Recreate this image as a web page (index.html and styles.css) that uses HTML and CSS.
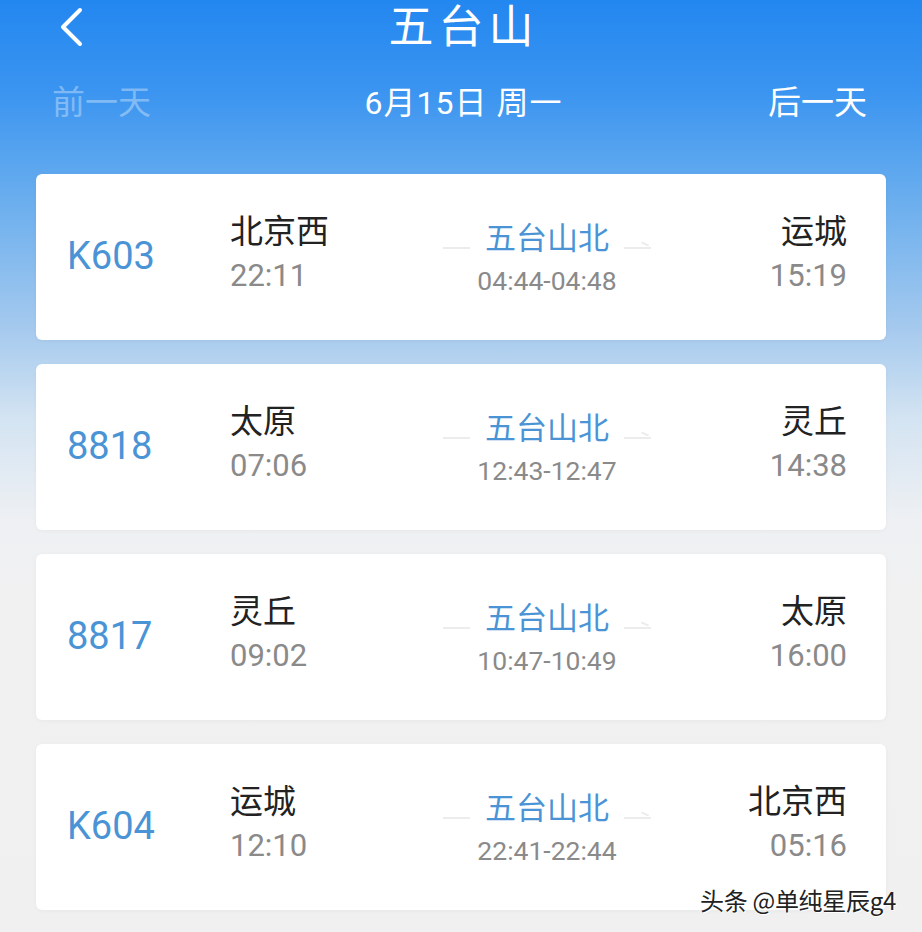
FILE: index.html
```html
<!DOCTYPE html>
<html lang="zh">
<head>
<meta charset="utf-8">
<link rel="stylesheet" href="styles.css">
</head>
<body>
<div class="page">
  <header class="topbar">
    <svg class="back" width="30" height="40" viewBox="0 0 30 40"><path d="M24 3 L7 20 L24 37" fill="none" stroke="#fff" stroke-width="4" stroke-linecap="round" stroke-linejoin="round"/></svg>
    <h1 class="title">五台山</h1>
  </header>
  <nav class="daterow">
    <span class="prev">前一天</span>
    <span class="date">6月15日 周一</span>
    <span class="next">后一天</span>
  </nav>
  <main class="list">
    <div class="card">
      <div class="num">K603</div>
      <div class="end"><div class="st">北京西</div><div class="tm">22:11</div></div>
      <div class="mid"><div class="midline"><span class="dash"></span><span class="mst">五台山北</span><span class="dash arrow"></span></div><div class="mtm">04:44-04:48</div></div>
      <div class="end right"><div class="st">运城</div><div class="tm">15:19</div></div>
    </div>
    <div class="card">
      <div class="num">8818</div>
      <div class="end"><div class="st">太原</div><div class="tm">07:06</div></div>
      <div class="mid"><div class="midline"><span class="dash"></span><span class="mst">五台山北</span><span class="dash arrow"></span></div><div class="mtm">12:43-12:47</div></div>
      <div class="end right"><div class="st">灵丘</div><div class="tm">14:38</div></div>
    </div>
    <div class="card">
      <div class="num">8817</div>
      <div class="end"><div class="st">灵丘</div><div class="tm">09:02</div></div>
      <div class="mid"><div class="midline"><span class="dash"></span><span class="mst">五台山北</span><span class="dash arrow"></span></div><div class="mtm">10:47-10:49</div></div>
      <div class="end right"><div class="st">太原</div><div class="tm">16:00</div></div>
    </div>
    <div class="card">
      <div class="num">K604</div>
      <div class="end"><div class="st">运城</div><div class="tm">12:10</div></div>
      <div class="mid"><div class="midline"><span class="dash"></span><span class="mst">五台山北</span><span class="dash arrow"></span></div><div class="mtm">22:41-22:44</div></div>
      <div class="end right"><div class="st">北京西</div><div class="tm">05:16</div></div>
    </div>
  </main>
  <div class="watermark">头条 @单纯星辰g4</div>
</div>
</body>
</html>
```

FILE: styles.css
```css
* { box-sizing: border-box; margin: 0; padding: 0; }
html, body { width: 922px; height: 932px; overflow: hidden; }
body {
  font-family: Roboto, "Noto Sans CJK SC", sans-serif;
  background: linear-gradient(180deg, #2387f0 0px, #3a94f0 90px, #6aaeee 200px, #a6caee 330px, #d4e4f2 420px, #eef0f3 520px, #f1f1f1 600px, #f0f0f0 932px);
}
.page { position: relative; width: 922px; height: 932px; }
.topbar {
  position: relative;
  height: 56px;
  display: flex;
  justify-content: center;
  align-items: flex-start;
}
.back { position: absolute; left: 56px; top: 7px; }
.title {
  font-family: "Noto Sans CJK SC", sans-serif;
  font-weight: 400;
  font-size: 45px;
  letter-spacing: 5px;
  color: #fff;
  line-height: 48px;
  padding-left: 5px;
}
.daterow {
  margin-top: 21px;
  height: 46px;
  display: flex;
  justify-content: space-between;
  align-items: center;
  padding: 0 55px 0 52px;
  font-family: "Noto Sans CJK SC", sans-serif;
  font-size: 33px;
  color: #fff;
}
.prev { color: rgba(255,255,255,0.35); }
.date { font-family: Roboto, "Noto Sans CJK SC", sans-serif; font-size: 32px; letter-spacing: 1px; margin-left: 8px; }
.list {
  margin-top: 51px;
  padding: 0 36px;
  display: flex;
  flex-direction: column;
  gap: 24px;
}
.card {
  height: 166px;
  background: #fff;
  border-radius: 6px;
  box-shadow: 0 1px 4px rgba(0,0,0,0.04);
  display: grid;
  grid-template-columns: 163px 213px 208px 1fr;
  align-items: center;
  padding: 0 39px 0 31px;
}
.num {
  font-size: 38px;
  color: #4a94d6;
  margin-top: -2px;
}
.end { display: flex; flex-direction: column; margin-top: -8px; }
.end.right { align-items: flex-end; }
.st {
  font-family: "Noto Sans CJK SC", sans-serif;
  font-size: 33px;
  color: #222;
  line-height: 46px;
}
.tm {
  font-size: 31px;
  color: #8a8a8a;
  line-height: 48px;
}
.mid { display: flex; flex-direction: column; align-items: center; margin-top: 3px; }
.midline { display: flex; align-items: center; width: 208px; justify-content: space-between; margin-bottom: 3px; }
.mst {
  font-family: "Noto Sans CJK SC", sans-serif;
  font-size: 31px;
  color: #4a94d6;
  line-height: 42px;
}
.dash {
  width: 27px;
  height: 2px;
  background: #ececec;
  margin-top: 24px;
  position: relative;
}
.dash.arrow::after {
  content: "";
  position: absolute;
  right: 2px;
  top: -4px;
  width: 8px;
  height: 2px;
  background: #ececec;
  transform: rotate(25deg);
}
.mtm {
  font-size: 26.5px;
  color: #8a8a8a;
  line-height: 42px;
}
.watermark {
  position: absolute;
  left: 700px;
  top: 882px;
  font-family: "Noto Sans CJK SC", sans-serif;
  font-size: 24px;
  color: #222;
  text-shadow: 1px 1px 0 #fff, -1px 0 0 #fff;
  letter-spacing: -0.3px;
}
```
